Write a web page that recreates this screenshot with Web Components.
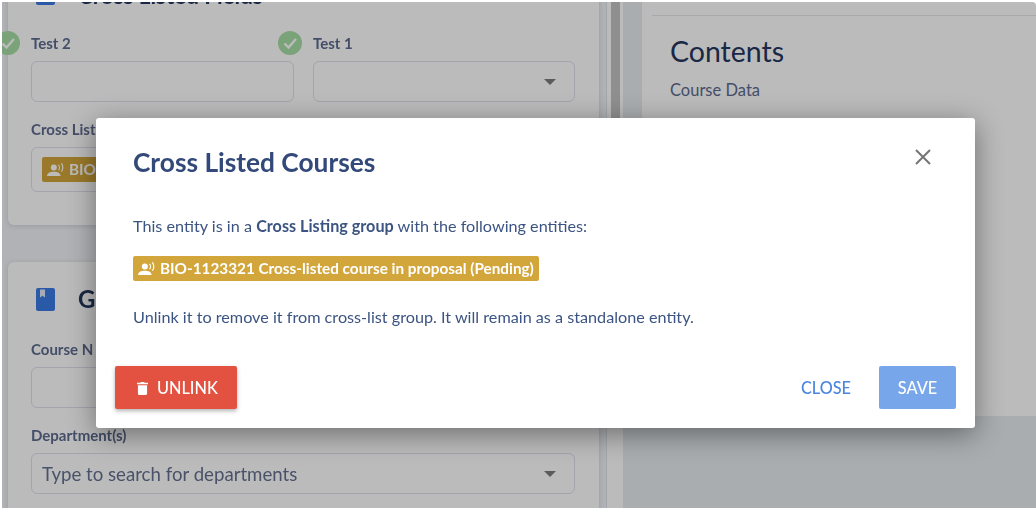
<!DOCTYPE html>
<html>
<head>
<meta charset="utf-8">
<title>Cross Listed Courses</title>
<style>
    html, body { margin: 0; padding: 0; background: #fff; height: 100%; overflow: hidden; }
    body { font-family: 'Lato', sans-serif; }
</style>
</head>
<body>
<course-page>
    <section-card heading="Cross Listed Fields" slot="left" class="first">
        <form-row>
            <form-field label="Test 2" check></form-field>
            <form-field label="Test 1" check select></form-field>
        </form-row>
        <form-field label="Cross List" tall>
            <status-chip>BIO</status-chip>
        </form-field>
    </section-card>
    <section-card heading="G" slot="left" class="second">
        <form-field label="Course N"></form-field>
        <form-field label="Department(s)" select placeholder="Type to search for departments"></form-field>
    </section-card>
    <contents-panel slot="right"></contents-panel>
</course-page>

<script>
const TRASH = `<svg width="11" height="14" viewBox="0 0 12 15" preserveAspectRatio="none" fill="#fff"><path d="M0 2h3.6l.7-1h3.4l.7 1H12v1.6H0zM1 4.6h10V13.4c0 .9-.7 1.6-1.6 1.6H2.6C1.7 15 1 14.3 1 13.4z"/></svg>`;
const SPEAKER = `<svg width="18" height="14" viewBox="0 0 18 14" fill="#fff"><circle cx="6.8" cy="4.5" r="3"/><path d="M0 13c0-2.8 3-4.3 6.8-4.3s6.800 1.500 6.800 4.300z"/><path d="M11.500 1.800c1.300 1.400 1.300 4 0 5.400M14.300 .3c2 2.300 2 6.100 0 8.400" fill="none" stroke="#fff" stroke-width="1.2"/></svg>`;

class CoursePage extends HTMLElement {
    constructor() {
        super();
        this.attachShadow({ mode: 'open' });
        this.shadowRoot.innerHTML = `
            <style>
                :host {
                    display: block;
                    position: relative;
                    box-sizing: border-box;
                    width: 1034px;
                    height: 506px;
                    margin: 2px 0 0 2px;
                    overflow: hidden;
                    border-top-right-radius: 4px;
                    background: #e7ecf0;
                    filter: blur(0.4px);
                }
                .layout { display: flex; height: 100%; }
                .left {
                    width: 605px;
                    flex: none;
                    box-sizing: border-box;
                    padding: 0 7px 0 6px;
                    background: #f0f3f7;
                    border-right: 1px solid #dfe3ea;
                    overflow: hidden;
                }
                .track { width: 16px; flex: none; background: #fff; padding-left: 4px; box-sizing: border-box; }
                .thumb { width: 9px; height: 300px; background: #c4c4c4; }
                .right { flex: 1; min-width: 0; padding-left: 19px; }
            </style>
            <div class="layout">
                <div class="left"><slot name="left"></slot></div>
                <div class="track"><div class="thumb"></div></div>
                <div class="right"><slot name="right"></slot></div>
            </div>
            <modal-dialog heading="Cross Listed Courses">
                <p>This entity is in a <b>Cross Listing group</b> with the following entities:</p>
                <status-chip>BIO-1123321 Cross-listed course in proposal (Pending)</status-chip>
                <p>Unlink it to remove it from cross-list group. It will remain as a standalone entity.</p>
            </modal-dialog>
        `;
    }
}

class SectionCard extends HTMLElement {
    constructor() {
        super();
        this.attachShadow({ mode: 'open' });
        const first = this.classList.contains('first');
        this.shadowRoot.innerHTML = `
            <style>
                :host {
                    display: block;
                    background: #fff;
                    border-radius: 6px;
                    box-shadow: 0 1px 5px rgba(60,70,90,.18);
                    padding: ${first ? '0 24px 0 23px' : '25px 24px 0 23px'};
                    margin-top: ${first ? '-21px' : '37px'};
                    height: ${first ? '244px' : '300px'};
                    box-sizing: border-box;
                    color: #2c3e66;
                }
                .head { display: flex; align-items: center; gap: 23px; margin-left: 5px; height: 24px; margin-bottom: 29px; }
                h2 {
                    margin: ${first ? '5px 0 0' : '0'};
                    font: 700 ${first ? '22.4px' : '24px'}/24px 'Lato', sans-serif;
                    color: #24365e;
                    white-space: nowrap;
                }
                .body { display: flex; flex-direction: column; gap: 18px; }
            </style>
            <div class="head">
                <svg width="19" height="23" viewBox="0 0 19 23"><path d="M2 0h15a2 2 0 0 1 2 2v19a2 2 0 0 1-2 2H2a2 2 0 0 1-2-2V2a2 2 0 0 1 2-2z" fill="#3a7ae4"/><path d="M4 1.500h5v8l-2.500-1.800L4 9.500z" fill="#fff" opacity=".85"/></svg>
                <h2>${this.getAttribute('heading')}</h2>
            </div>
            <div class="body"><slot></slot></div>
        `;
    }
}

class FormRow extends HTMLElement {
    constructor() {
        super();
        this.attachShadow({ mode: 'open' });
        this.shadowRoot.innerHTML = `
            <style>:host { display: grid; grid-template-columns: 263px 262px; column-gap: 19px; }</style>
            <slot></slot>
        `;
    }
}

class FormField extends HTMLElement {
    constructor() {
        super();
        this.attachShadow({ mode: 'open' });
        const check = this.hasAttribute('check');
        const select = this.hasAttribute('select');
        const tall = this.hasAttribute('tall');
        const placeholder = this.getAttribute('placeholder') || '';
        this.shadowRoot.innerHTML = `
            <style>
                :host { display: block; position: relative; min-width: 0; }
                label { display: block; font: 700 15px/18px 'Lato', sans-serif; color: #5d6b8e; margin-bottom: 9px; white-space: nowrap; }
                .check { position: absolute; left: -35px; top: -3px; }
                .box {
                    height: ${tall ? '45px' : '41px'};
                    box-sizing: border-box;
                    border: 1.5px solid #dde1ea;
                    border-radius: 6px;
                    display: flex;
                    align-items: center;
                    justify-content: space-between;
                    padding: 0 18px 0 10px;
                    font: 400 18.65px 'Lato', sans-serif;
                    color: #64718f;
                    white-space: nowrap;
                }
                .caret { width: 0; height: 0; border: 6px solid transparent; border-top: 6px solid #7c7c7c; border-bottom: 0; }
            </style>
            ${check ? `<svg class="check" width="24" height="24" viewBox="0 0 24 24"><circle cx="12" cy="12" r="12" fill="#a8dfa6"/><path d="M6.500 12.500l4 4 7.500-8.500" fill="none" stroke="#fff" stroke-width="2.4"/></svg>` : ''}
            <label>${this.getAttribute('label')}</label>
            <div class="box"><span>${placeholder}<slot></slot></span>${select ? '<span class="caret"></span>' : ''}</div>
        `;
    }
}

class StatusChip extends HTMLElement {
    constructor() {
        super();
        this.attachShadow({ mode: 'open' });
        this.shadowRoot.innerHTML = `
            <style>
                :host {
                    display: inline-flex;
                    align-items: center;
                    gap: 4px;
                    height: 25px;
                    box-sizing: border-box;
                    padding: 0 5px;
                    background: #d2a63a;
                    border-radius: 2px;
                    color: #fff;
                    font: 700 15.3px/25px 'Lato', sans-serif;
                    white-space: nowrap;
                    vertical-align: top;
                }
            </style>
            ${SPEAKER}<slot></slot>
        `;
    }
}

class ContentsPanel extends HTMLElement {
    constructor() {
        super();
        this.attachShadow({ mode: 'open' });
        this.shadowRoot.innerHTML = `
            <style>
                :host {
                    display: block;
                    height: 414px;
                    background: #fff;
                    box-sizing: border-box;
                    color: #5d6b8e;
                }
                .rule { height: 13px; border-bottom: 1px solid #e6e8ee; margin-left: 10px; }
                .inner { padding: 17px 0 0 28px; }
                h1 { margin: 0 0 11px; font: 400 28.5px/36px 'Lato', sans-serif; color: #24365e; }
                .item { font: 400 16.5px/20px 'Lato', sans-serif; }
            </style>
            <div class="rule"></div>
            <div class="inner">
                <h1>Contents</h1>
                <div class="item">Course Data</div>
            </div>
        `;
    }
}

class ModalDialog extends HTMLElement {
    constructor() {
        super();
        this.attachShadow({ mode: 'open' });
        this.shadowRoot.innerHTML = `
            <style>
                :host { position: absolute; inset: 0; display: block; background: rgba(0,0,0,.267); }
                .dialog {
                    position: absolute;
                    left: 94px;
                    top: 116px;
                    width: 879px;
                    height: 310px;
                    background: #fff;
                    border-radius: 3px;
                    box-shadow: 0 6px 28px rgba(0,0,0,.42);
                    display: flex;
                    flex-direction: column;
                    color: #3c5482;
                    box-sizing: border-box;
                }
                header {
                    display: flex;
                    justify-content: space-between;
                    align-items: flex-start;
                    padding: 26px 43px 0 37px;
                }
                h1 { margin: 0; font: 700 26.3px/36px 'Lato', sans-serif; color: #33497a; }
                .close { margin-top: 4px; display: block; }
                .content { flex: 1; padding: 36px 37px 0; font: 400 16.2px/20px 'Lato', sans-serif; }
                ::slotted(p) { margin: 0; }
                ::slotted(status-chip) { margin: 20px 0 26px; }
                footer { display: flex; align-items: center; padding: 0 19px 19px; }
                button {
                    font: 500 16.3px 'Lato', sans-serif;
                    height: 43px;
                    border: 0;
                    border-radius: 2px;
                    background: none;
                    padding: 0;
                }
                .unlink {
                    width: 122px;
                    padding-left: 22px;
                    box-sizing: border-box;
                    background: #e35241;
                    color: #fff;
                    display: flex;
                    align-items: center;
                    gap: 9px;
                    box-shadow: 0 2px 4px rgba(0,0,0,.3);
                }
                .cancel { margin-left: auto; margin-right: 28px; color: #4a86e0; }
                .save { width: 77px; background: #78a6ea; color: #fff; }
            </style>
            <div class="dialog">
                <header>
                    <h1>${this.getAttribute('heading')}</h1>
                    <svg class="close" width="18" height="18" viewBox="0 0 18 18"><path d="M2 2l14 14M16 2L2 16" stroke="#757575" stroke-width="2"/></svg>
                </header>
                <div class="content"><slot></slot></div>
                <footer>
                    <button class="unlink">${TRASH}UNLINK</button>
                    <button class="cancel">CLOSE</button>
                    <button class="save">SAVE</button>
                </footer>
            </div>
        `;
    }
}

customElements.define('status-chip', StatusChip);
customElements.define('form-field', FormField);
customElements.define('form-row', FormRow);
customElements.define('section-card', SectionCard);
customElements.define('contents-panel', ContentsPanel);
customElements.define('modal-dialog', ModalDialog);
customElements.define('course-page', CoursePage);
</script>
</body>
</html>
